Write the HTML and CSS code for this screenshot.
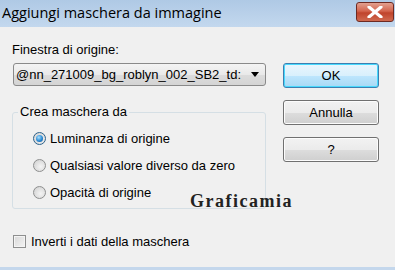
FILE: index.html
```html
<!DOCTYPE html>
<html>
<head>
<meta charset="utf-8">
<link rel="stylesheet" href="styles.css">
</head>
<body>
<div class="window">
  <div class="titlebar">
    <span class="title">Aggiungi maschera da immagine</span>
    <span class="close"><svg width="16" height="12" viewBox="0 0 16 12"><path d="M2 1 L14 11 M14 1 L2 11" stroke="#fff" stroke-width="3.2" stroke-linecap="round"/></svg></span>
  </div>
  <div class="main">
    <div class="left">
      <div class="label">Finestra di origine:</div>
      <div class="combo"><span class="combo-text">@nn_271009_bg_roblyn_002_SB2_td:</span><span class="arrow"></span></div>
      <fieldset class="group">
        <legend>Crea maschera da</legend>
        <div class="radio-row"><span class="radio checked"></span>Luminanza di origine</div>
        <div class="radio-row"><span class="radio"></span>Qualsiasi valore diverso da zero</div>
        <div class="radio-row"><span class="radio"></span>Opacità di origine</div>
      </fieldset>
      <div class="check-row"><span class="checkbox"></span>Inverti i dati della maschera</div>
    </div>
    <div class="right">
      <div class="btn default">OK</div>
      <div class="btn">Annulla</div>
      <div class="btn">?</div>
    </div>
  </div>
  <div class="watermark">Graficamia</div>
</div>
</body>
</html>
```

FILE: styles.css
```css
html, body {
  margin: 0;
  padding: 0;
}
body {
  width: 395px;
  height: 270px;
  overflow: hidden;
  background: #f0f0f0;
  font-family: "Liberation Sans", Arial, sans-serif;
  font-size: 13px;
  color: #000;
}
.window {
  position: relative;
  width: 395px;
  height: 270px;
  box-sizing: border-box;
  border-bottom: 3px solid #c4d7ec;
  background: #f0f0f0;
}
.titlebar {
  height: 27px;
  display: flex;
  align-items: center;
  justify-content: space-between;
  background: linear-gradient(#afc9e5, #c3d8ee);
  padding: 0 1px 0 2px;
}
.title {
  font-family: "Open Sans", "Noto Sans", sans-serif;
  font-size: 14.5px;
  color: #000;
  margin-top: -2px;
}
.close {
  width: 38px;
  height: 20px;
  margin-top: -3px;
  box-sizing: border-box;
  border: 1px solid #6e2a22;
  border-radius: 3px;
  background: linear-gradient(#e2a08f, #d4654e 45%, #c0442c 55%, #d06a50);
  display: flex;
  align-items: center;
  justify-content: center;
}
.main {
  display: flex;
  padding-left: 12px;
}
.left {
  width: 254px;
}
.label {
  margin-top: 16px;
  height: 14px;
  line-height: 14px;
}
.combo {
  margin-top: 6px;
  margin-left: 1px;
  height: 23px;
  box-sizing: border-box;
  border: 1px solid #8a8a8a;
  border-radius: 3px;
  background: linear-gradient(#f4f4f4, #e9e9e9 50%, #dcdcdc 51%, #d4d4d4);
  display: flex;
  align-items: center;
  padding: 0 6px 0 2px;
  overflow: hidden;
}
.combo-text {
  flex: 1;
  white-space: nowrap;
  overflow: hidden;
}
.arrow {
  width: 0;
  height: 0;
  border-left: 4px solid transparent;
  border-right: 4px solid transparent;
  border-top: 5px solid #000;
  margin-left: 1px;
}
.group {
  margin: 19px 0 0 0;
  padding: 6px 0 0 0;
  height: 104px;
  box-sizing: border-box;
  border: 1px solid #d5dfe5;
  border-radius: 3px;
}
.group legend {
  padding: 0 2px;
  margin-left: 5px;
  line-height: 14px;
}
.radio-row {
  display: flex;
  align-items: center;
  height: 27px;
  padding-left: 20px;
}
.radio {
  width: 13px;
  height: 13px;
  box-sizing: border-box;
  border-radius: 50%;
  border: 1px solid #8e8f8f;
  background: radial-gradient(circle at 60% 60%, #f4f4f4, #d9d9d9 70%, #c9c9c9);
  margin-right: 4px;
  position: relative;
}
.radio.checked {
  border-color: #2c628b;
}
.radio.checked::after {
  content: "";
  position: absolute;
  left: 2px;
  top: 2px;
  width: 7px;
  height: 7px;
  border-radius: 50%;
  background: radial-gradient(circle at 40% 35%, #a8e0ff, #2a8ad4 55%, #0f4f8f);
}
.check-row {
  display: flex;
  align-items: center;
  margin-top: 25px;
  margin-left: 1px;
  height: 14px;
}
.checkbox {
  width: 13px;
  height: 13px;
  box-sizing: border-box;
  border: 1px solid #8e8f8f;
  background: linear-gradient(135deg, #d8d8d8, #f4f4f4);
  box-shadow: inset 0 0 0 1px #f4f4f4;
  margin-right: 5px;
}
.right {
  margin-left: 17px;
  padding-top: 36px;
  display: flex;
  flex-direction: column;
  gap: 12px;
}
.btn {
  width: 96px;
  height: 25px;
  box-sizing: border-box;
  border: 1px solid #707070;
  border-radius: 3px;
  background: linear-gradient(#f2f2f2, #ebebeb 50%, #dddddd 51%, #cfcfcf);
  box-shadow: inset 0 0 0 1px #fcfcfc;
  display: flex;
  align-items: center;
  justify-content: center;
  font-size: 13px;
}
.btn.default {
  border-color: #3c7fb1;
  background: linear-gradient(#eaf6fd, #d9f0fc 50%, #bee6fd 51%, #a7d9f5);
  box-shadow: inset 0 0 0 1px #48d9fd;
}
.watermark {
  position: absolute;
  left: 190px;
  top: 191px;
  font-family: "Liberation Serif", serif;
  font-weight: bold;
  font-size: 18px;
  letter-spacing: 1.5px;
  color: #222;
}
```
